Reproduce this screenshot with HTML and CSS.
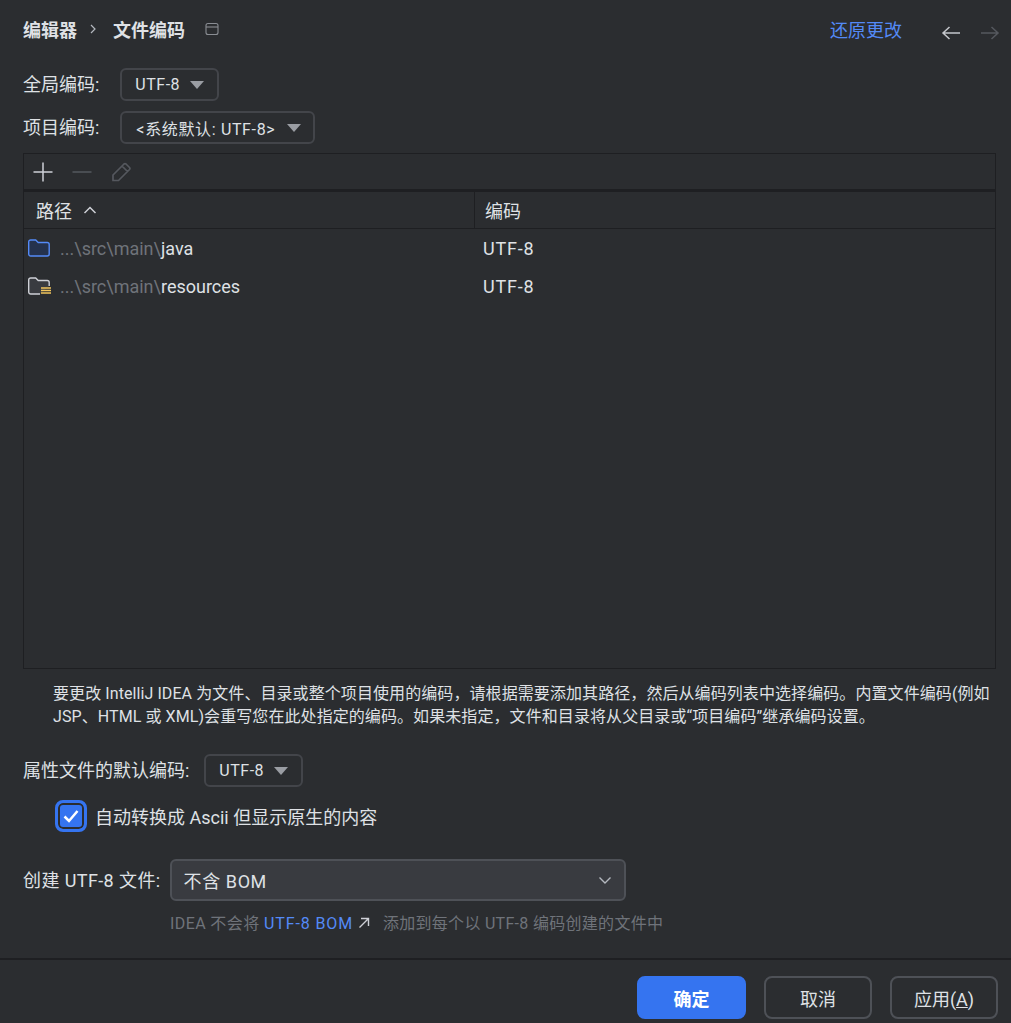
FILE: index.html
```html
<!DOCTYPE html>
<html lang="zh-CN">
<head>
  <meta charset="UTF-8" />
  <title>文件编码</title>
  <link rel="stylesheet" href="styles.css">
</head>
<body>
  <div class="dialog">
    <div class="content">
      <header class="header">
        <span class="crumb">编辑器</span>
        <svg class="crumb-sep" width="8" height="12" viewBox="0 0 8 12"><path d="M2 2l4 4-4 4" fill="none" stroke="#b4b8bf" stroke-width="1.2"/></svg>
        <span class="crumb">文件编码</span>
        <svg class="crumb-icon" width="14" height="14" viewBox="0 0 14 14"><rect x="1" y="1.5" width="12" height="11" rx="2" fill="none" stroke="#8a8d93" stroke-width="1.1"/><path d="M1 5h12" stroke="#8a8d93" stroke-width="1.1"/></svg>
        <a class="revert">还原更改</a>
        <svg class="nav-arrow" width="20" height="16" viewBox="0 0 20 16"><path d="M19 8H2M8.500 2L2 8l6.500 6" fill="none" stroke="#c4c6cb" stroke-width="1.500"/></svg>
        <svg class="nav-arrow next" width="20" height="16" viewBox="0 0 20 16"><path d="M1 8h17M11.500 2L18 8l-6.500 6" fill="none" stroke="#55585e" stroke-width="1.500"/></svg>
      </header>

      <div class="field field-global">
        <label>全局编码:</label>
        <div class="select w-99">UTF-8<i class="caret"></i></div>
      </div>
      <div class="field field-project">
        <label>项目编码:</label>
        <div class="select w-195">&lt;系统默认: UTF-8&gt;<i class="caret"></i></div>
      </div>

      <div class="table">
        <div class="toolbar">
          <svg width="20" height="20" viewBox="0 0 20 20"><path d="M10 0.500v19M0.500 10h19" stroke="#ced0d6" stroke-width="1.500"/></svg>
          <svg width="20" height="20" viewBox="0 0 20 20"><path d="M0.500 10h19" stroke="#55585e" stroke-width="1.500"/></svg>
          <svg width="20" height="20" viewBox="-1 0 20 20"><path d="M1 18.500v-5.500L12 2a1.500 1.500 0 0 1 2 0l3.500 3.500a1.500 1.500 0 0 1 0 2L6.500 18.500zM10 4l5.500 5.500" fill="none" stroke="#55585e" stroke-width="1.700"/></svg>
        </div>
        <div class="row table-head">
          <div class="cell-path"><span>路径</span>
            <svg class="sort" width="14" height="8" viewBox="0 0 14 8"><path d="M1.500 7L7 1.500 12.500 7" fill="none" stroke="#ced0d6" stroke-width="1.500"/></svg>
          </div>
          <div class="cell-enc">编码</div>
        </div>
        <div class="row">
          <div class="cell-path">
            <svg class="folder" width="22" height="18" viewBox="0 0 22 18"><path d="M0.700 3a2 2 0 0 1 2-2h5l2.500 2.500h9a2 2 0 0 1 2 2V15a2 2 0 0 1-2 2h-16.500a2 2 0 0 1-2-2z" fill="#25324d" stroke="#548af7" stroke-width="1.400"/></svg>
            <span><span class="dim">...\src\main\</span>java</span>
          </div>
          <div class="cell-val">UTF-8</div>
        </div>
        <div class="row">
          <div class="cell-path">
            <svg class="folder res" width="24" height="18" viewBox="0 0 24 18"><path d="M12 17H2.700a2 2 0 0 1-2-2V3a2 2 0 0 1 2-2h5l2.500 2.500h9a2 2 0 0 1 2 2v3.500" fill="#393b40" stroke="#ced0d6" stroke-width="1.400"/><path d="M13 11h10M13 13.500h10M13 16h10" stroke="#f2c55c" stroke-width="1.500"/></svg>
            <span><span class="dim">...\src\main\</span>resources</span>
          </div>
          <div class="cell-val">UTF-8</div>
        </div>
      </div>

      <p class="note">要更改 IntelliJ IDEA 为文件、目录或整个项目使用的编码，请根据需要添加其路径，然后从编码列表中选择编码。内置文件编码(例如 JSP、HTML 或 XML)会重写您在此处指定的编码。如果未指定，文件和目录将从父目录或“项目编码”继承编码设置。</p>

      <div class="field field-props">
        <label>属性文件的默认编码:</label>
        <div class="select w-99">UTF-8<i class="caret"></i></div>
      </div>

      <div class="check-row">
        <span class="check">
          <svg width="18" height="16" viewBox="0 0 18 16"><path d="M2.500 8.500L7 13 15.500 3" fill="none" stroke="#fff" stroke-width="2.500"/></svg>
        </span>
        <span>自动转换成 Ascii 但显示原生的内容</span>
      </div>

      <div class="field field-bom">
        <label>创建 UTF-8 文件:</label>
        <div class="combo"><span>不含 BOM</span>
          <svg width="14" height="8" viewBox="0 0 14 8"><path d="M1.500 1.500L7 7l5.500-5.500" fill="none" stroke="#b4b8bf" stroke-width="1.400"/></svg>
        </div>
      </div>
      <p class="hint">IDEA 不会将 <a>UTF-8 BOM</a>
        <svg width="12" height="12" viewBox="0 0 12 12"><path d="M1.500 10.500L10.500 1.500M3 1.500h7.500V9" fill="none" stroke="#ced0d6" stroke-width="1.400"/></svg>
        <span class="hint-rest">添加到每个以 UTF-8 编码创建的文件中</span></p>
    </div>

    <footer class="footer">
      <button class="btn primary">确定</button>
      <button class="btn">取消</button>
      <button class="btn">应用(<u>A</u>)</button>
    </footer>
  </div>
</body>
</html>
```
FILE: styles.css
```css
* {
  box-sizing: border-box;
}
body {
  margin: 0;
  background: #2b2d30;
  color: #dfe1e5;
  font-family: Roboto, "Noto Sans CJK SC", sans-serif;
  font-size: 18px;
}
.dialog {
  height: 1023px;
  display: flex;
  flex-direction: column;
  overflow: hidden;
}
.content {
  flex: 1;
  padding: 0 15px 0 23px;
}
.header {
  height: 60px;
  padding-bottom: 2px;
  display: flex;
  align-items: center;
}
.crumb {
  font-weight: 700;
  white-space: nowrap;
}
.crumb-sep {
  margin: 0 16px 0 12px;
}
.crumb-icon {
  margin-left: 20px;
}
.revert {
  margin-left: auto;
  color: #548af7;
}
.nav-arrow {
  margin-top: 8px;
  margin-left: 39px;
}
.nav-arrow.next {
  margin-left: 19px;
  margin-right: -4px;
}
.field {
  display: flex;
  align-items: center;
  white-space: nowrap;
}
.field label {
  margin-bottom: 3px;
}
.field-global {
  margin-top: 8px;
}
.field-project {
  margin-top: 10px;
}
.field-props {
  margin-top: 26px;
}
.field-bom {
  margin-top: 27px;
}
.field-bom label {
  letter-spacing: 0.4px;
}
.select {
  height: 33px;
  margin-left: 21px;
  padding-left: 13px;
  display: flex;
  align-items: center;
  border: 2px solid #43454a;
  border-radius: 6px;
  font-size: 16px;
  letter-spacing: 0.5px;
}
.field-props .select {
  margin-left: 15px;
}
.w-99 {
  width: 99px;
}
.w-195 {
  width: 195px;
  padding-left: 14px;
  letter-spacing: 0.65px;
}
.w-195 .caret {
  margin-left: 12px;
}
.caret {
  margin-left: 10px;
  border-left: 7px solid transparent;
  border-right: 7px solid transparent;
  border-top: 8px solid #9a9da3;
}
.table {
  height: 516px;
  margin-top: 9px;
  border: 1px solid #1e1f22;
}
.toolbar {
  height: 38px;
  padding-left: 9px;
  display: flex;
  align-items: center;
  gap: 19px;
  border-bottom: 3px solid #1e1f22;
}
.row {
  height: 38px;
  display: flex;
  align-items: center;
}
.table-head {
  height: 37px;
  border-bottom: 1px solid #1e1f22;
}
.cell-path {
  width: 451px;
  padding-left: 4px;
  display: flex;
  align-items: center;
  white-space: nowrap;
}
.table-head .cell-path {
  height: 100%;
  padding-left: 12px;
  border-right: 1px solid #1e1f22;
}
.cell-enc {
  padding-left: 10px;
}
.cell-val {
  padding-left: 8px;
  letter-spacing: 0.8px;
}
.sort {
  margin-left: 11px;
}
.folder {
  margin-right: 10px;
}
.folder.res {
  margin-right: 8px;
}
.dim {
  color: #6f737a;
}
.note {
  margin: 13px 0 0 30px;
  font-size: 16px;
  line-height: 23px;
  letter-spacing: 0.08px;
}
.check-row {
  margin: 13px 0 0 32px;
  display: flex;
  align-items: center;
  gap: 8px;
}
.check {
  width: 32px;
  height: 32px;
  display: flex;
  align-items: center;
  justify-content: center;
  background: #3574f0;
  border: 3px solid #3574f0;
  border-radius: 8px;
  box-shadow: inset 0 0 0 2px #2b2d30;
}
.combo {
  width: 456px;
  height: 42px;
  margin-left: 9px;
  padding: 0 12px;
  display: flex;
  align-items: center;
  justify-content: space-between;
  background: #393b40;
  border: 2px solid #4e5157;
  border-radius: 6px;
  letter-spacing: 0.6px;
}
.hint {
  margin: 12px 0 0 147px;
  color: #6f737a;
  font-size: 16px;
  line-height: 22px;
  letter-spacing: 0.4px;
}
.hint a {
  color: #548af7;
  letter-spacing: 0.9px;
}
.hint-rest {
  margin-left: 9px;
  letter-spacing: 0.3px;
}
.footer {
  height: 65px;
  padding: 16px 13px 0 0;
  display: flex;
  justify-content: flex-end;
  gap: 18px;
  border-top: 2px solid #1e1f22;
}
.btn {
  width: 108px;
  height: 43px;
  background: transparent;
  border: 2px solid #4e5157;
  border-radius: 8px;
  color: #dfe1e5;
  font-family: inherit;
  font-size: 18px;
}
.btn.primary {
  width: 109px;
  background: #3574f0;
  border-color: #3574f0;
  color: #fff;
  font-weight: 700;
}
```
